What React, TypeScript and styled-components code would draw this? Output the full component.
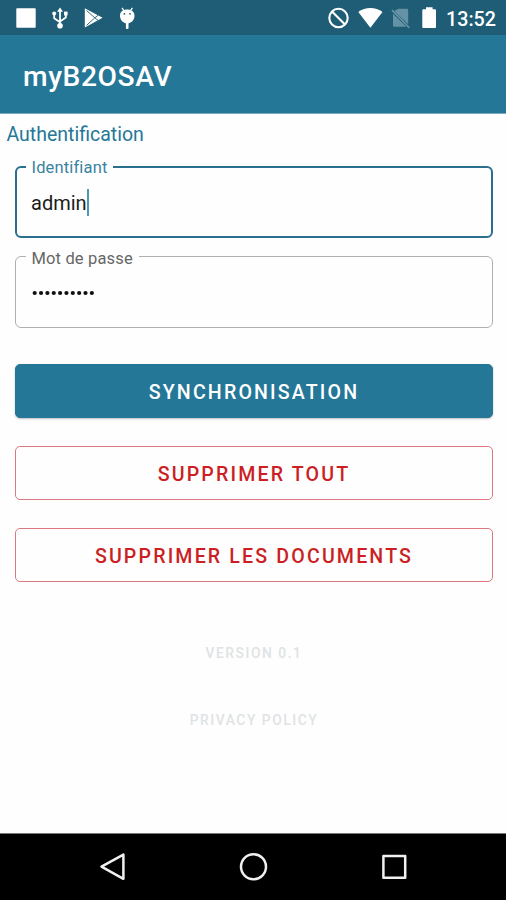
import React from "react";
import styled, { createGlobalStyle } from "styled-components";

const Global = createGlobalStyle`
  * { box-sizing: border-box; }
  body { margin: 0; background: #fefefe; }
  button { font: inherit; }
`;

const Screen = styled.div`
  width: 506px;
  height: 900px;
  display: flex;
  flex-direction: column;
  background: #fefefe;
  font-family: Roboto, "Liberation Sans", sans-serif;
  overflow: hidden;
`;

const StatusBar = styled.div`
  height: 35px;
  flex: none;
  display: flex;
  justify-content: space-between;
  background: #1e5d75;
  color: #fff;
`;

const StatusIcons = styled.svg`
  display: block;
  height: 35px;
`;

const StatusRight = styled.div`
  display: flex;
  align-items: center;
  padding-right: 10px;
`;

const Clock = styled.span`
  width: 50px;
  font-size: 19.7px;
  line-height: 35px;
  font-weight: 500;
  white-space: nowrap;
  padding-top: 3px;
`;

const AppBar = styled.header`
  height: 79px;
  flex: none;
  display: flex;
  align-items: center;
  padding: 6px 0 0 23px;
  background: #257797;
  border-bottom: 1px solid #79a9bd;
`;

const Title = styled.h1`
  margin: 0;
  color: #fff;
  font-size: 28.2px;
  line-height: 34px;
  font-weight: 500;
  letter-spacing: 0.6px;
`;

const Content = styled.main`
  flex: 1;
  display: flex;
  flex-direction: column;
  padding: 0 13.5px 0 14.5px;
`;

const SectionTitle = styled.h2`
  margin: 9px 0 19px -8px;
  color: #257797;
  font-size: 19.5px;
  line-height: 24px;
  font-weight: 400;
`;

const Field = styled.div<{ $focused?: boolean }>`
  position: relative;
  height: 72px;
  margin-bottom: 18px;
  display: flex;
  align-items: center;
  padding: ${(p) => (p.$focused ? "1px 0 0 14.5px" : "1px 0 0 15.5px")};
  border: ${(p) => (p.$focused ? "2px solid #2b6f8e" : "1px solid #b0b0b0")};
  border-radius: 6px;
`;

const FieldLabel = styled.label<{ $focused?: boolean; $width: number }>`
  position: absolute;
  left: ${(p) => (p.$focused ? 9 : 10)}px;
  top: ${(p) => (p.$focused ? -10 : -8)}px;
  width: ${(p) => p.$width}px;
  padding-left: 6px;
  background: #fefefe;
  color: ${(p) => (p.$focused ? "#3a83a0" : "#666")};
  font-size: 16.5px;
  line-height: 20px;
  letter-spacing: 0.15px;
  white-space: nowrap;
`;

const FieldValue = styled.span`
  color: #1c1c1c;
  font-size: 20px;
  line-height: 26px;
`;

const Caret = styled.span`
  width: 2px;
  height: 27px;
  background: #4f98b4;
`;

const Mask = styled.svg`
  display: block;
`;

const Actions = styled.div`
  display: flex;
  flex-direction: column;
  gap: 28px;
  margin-top: 18px;
`;

const Button = styled.button<{ $filled?: boolean }>`
  height: 54px;
  padding: 3px 0 0 1px;
  border: 1px solid ${(p) => (p.$filled ? "#257797" : "#dc7880")};
  border-radius: 5px;
  background: ${(p) => (p.$filled ? "#257797" : "#fefefe")};
  color: ${(p) => (p.$filled ? "#fff" : "#cb1f24")};
  box-shadow: ${(p) => (p.$filled ? "0 1px 2px rgba(0,0,0,.25)" : "none")};
  font-size: 19.6px;
  font-weight: 500;
  letter-spacing: 2.15px;
  white-space: nowrap;
`;

const Footer = styled.footer`
  display: flex;
  flex-direction: column;
  align-items: center;
  gap: 47px;
  margin-top: 61px;
`;

const FooterText = styled.span`
  padding-left: 1px;
  color: #dfe3e4;
  font-size: 13.8px;
  line-height: 20px;
  font-weight: 500;
  letter-spacing: 1.55px;
`;

const NavBar = styled.nav`
  height: 67px;
  flex: none;
  background: #000;
  border-top: 1px solid #777;
`;

const NavIcons = styled.svg`
  display: block;
`;

const LeftIcons = () => (
  <StatusIcons width="150" height="35" viewBox="0 0 150 35" fill="#fff">
    <rect x="16.3" y="8.3" width="19.4" height="19.4" rx="0.8" />
    <g>
      <path d="M60 7.5l3 4.2h-6z" />
      <path d="M60 10v15M54.2 14v4.2l5.8 4M65.8 14v3.6L60 21.5" fill="none" stroke="#fff" strokeWidth="1.8" />
      <circle cx="54.2" cy="13.6" r="2" />
      <rect x="64" y="11.6" width="3.6" height="3.8" />
      <circle cx="60" cy="25.8" r="2.8" />
    </g>
    <path d="M84.8 8.2L102.6 17.8L84.8 27.4z" />
    <path d="M86.5 10.5L94.8 17.8L86.5 25.4M94.8 17.8l3.4-2.6M94.8 17.8l3.4 2.6" fill="none" stroke="#1e5d75" strokeWidth="0.9" />
    <path d="M122 7.8l2.2 3.4M132.4 7.8l-2.2 3.4" stroke="#fff" strokeWidth="1.3" />
    <path d="M120 15.8C120 11.8 123 9.6 127.2 9.6s7.3 2.2 7.3 6.2c0 4.3-3.2 7.6-7.3 7.6s-7.2-3.3-7.2-7.6z" />
    <rect x="125.9" y="22" width="2.6" height="7" rx="1" />
    <circle cx="124.4" cy="13.8" r="0.9" fill="#1e5d75" />
    <circle cx="130" cy="13.8" r="0.9" fill="#1e5d75" />
  </StatusIcons>
);

const RightIcons = () => (
  <StatusIcons width="120" height="35" viewBox="326 0 120 35" fill="#fff">
    <g fill="none" stroke="#fff" strokeWidth="2.1">
      <circle cx="338.5" cy="18" r="9.2" />
      <path d="M332 11.5l13 13" />
    </g>
    <path d="M358.3 12.1C365 6.5 375.8 6.5 382.5 12.1L370.4 27.8z" />
    <path d="M398.5 8.8h8.3q1.4 0 1.4 1.4v14L394.2 11zM393 13.7L406.3 26.8H394.4q-1.4 0-1.4-1.4z" fill="#6593a5" />
    <path d="M392 10.2L409.2 27.6" stroke="#6593a5" strokeWidth="1.7" />
    <path d="M426 7.3h6.6v2H435q1 0 1 1v16.8q0 1-1 1H423.3q-1 0-1-1V10.3q0-1 1-1H426z" />
  </StatusIcons>
);

const PASSWORD_LENGTH = 10;

export default function App() {
  return (
    <>
      <Global />
      <Screen>
        <StatusBar>
          <LeftIcons />
          <StatusRight>
            <RightIcons />
            <Clock>13:52</Clock>
          </StatusRight>
        </StatusBar>
        <AppBar>
          <Title>myB2OSAV</Title>
        </AppBar>
        <Content>
          <SectionTitle>Authentification</SectionTitle>
          <Field $focused>
            <FieldLabel $focused $width={87}>Identifiant</FieldLabel>
            <FieldValue>admin</FieldValue>
            <Caret />
          </Field>
          <Field>
            <FieldLabel $width={113}>Mot de passe</FieldLabel>
            <Mask width="66" height="8" viewBox="0 0 66 8" fill="#111">
              {Array.from({ length: PASSWORD_LENGTH }, (_, i) => (
                <circle key={i} cx={3.7 + i * 6.35} cy="4" r="2.1" />
              ))}
            </Mask>
          </Field>
          <Actions>
            <Button $filled>SYNCHRONISATION</Button>
            <Button>SUPPRIMER TOUT</Button>
            <Button>SUPPRIMER LES DOCUMENTS</Button>
          </Actions>
          <Footer>
            <FooterText>VERSION 0.1</FooterText>
            <FooterText>PRIVACY POLICY</FooterText>
          </Footer>
        </Content>
        <NavBar>
          <NavIcons width="506" height="66" viewBox="0 834 506 66" fill="none" stroke="#f0f0f0" strokeWidth="2.5" strokeLinejoin="round">
            <path d="M101.5 866.6L123.4 854.6V878.8z" />
            <circle cx="253.5" cy="866.7" r="12.5" />
            <rect x="383.4" y="856" width="21.8" height="21.8" />
          </NavIcons>
        </NavBar>
      </Screen>
    </>
  );
}
